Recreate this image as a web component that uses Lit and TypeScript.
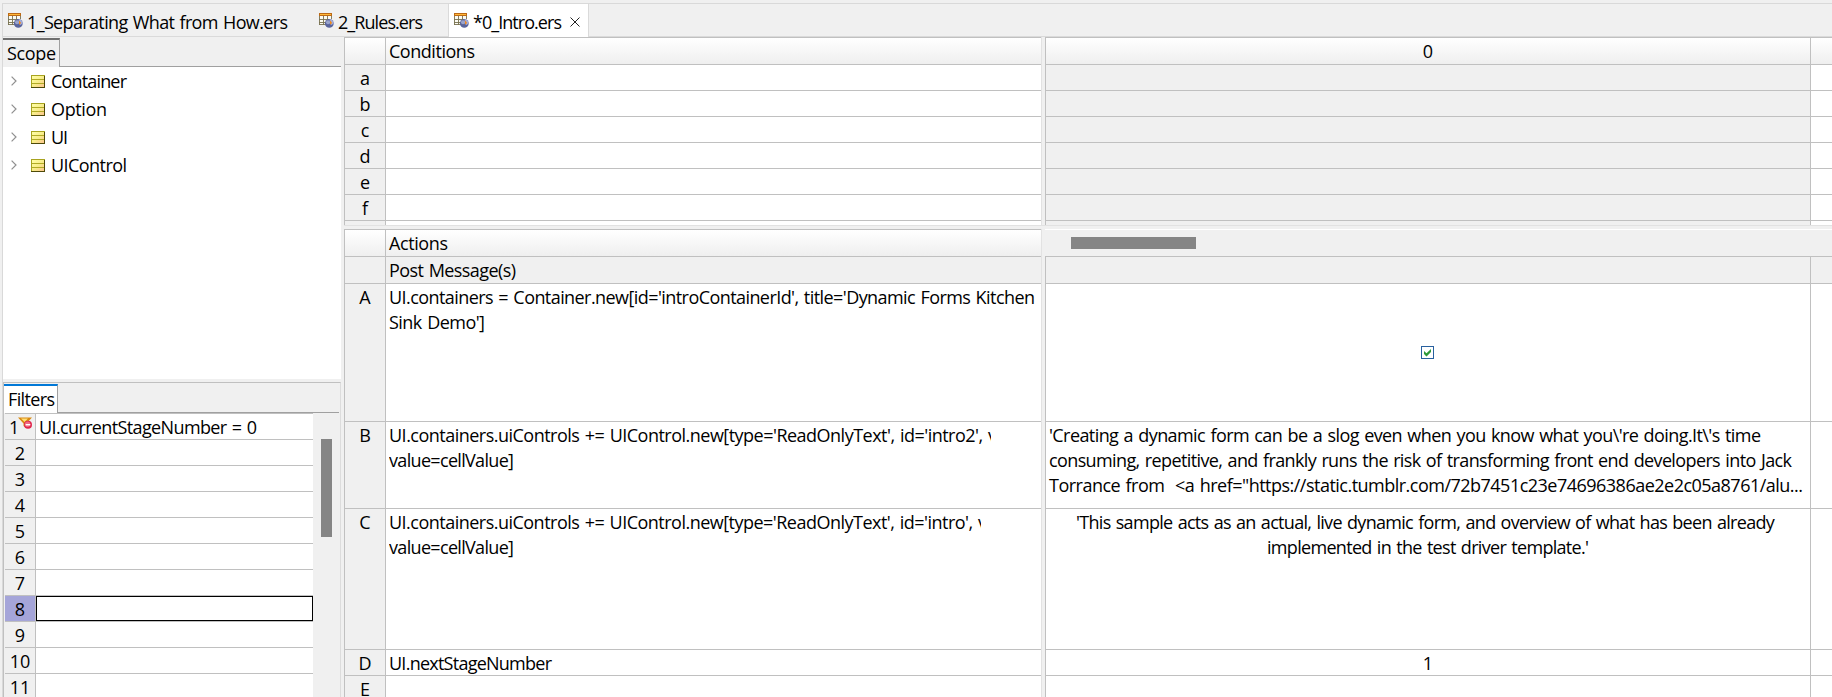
import { LitElement, html, css, svg, nothing } from "lit";
import { customElement, property, state } from "lit/decorators.js";
import { classMap } from "lit/directives/class-map.js";
import { styleMap } from "lit/directives/style-map.js";

/** One line of text tracked to occupy a given advance width. */
@customElement("text-line")
class TextLine extends LitElement {
  static styles = css`
    :host { display: block; white-space: pre; line-height: 25px; height: 25px; word-spacing: 1.2px; }
    .run { display: inline-block; }
  `;
  @property() text = "";
  @property({ type: Number }) width = 0;
  @state() private tracking = 0;

  firstUpdated() {
    const run = this.renderRoot.querySelector(".run") as HTMLElement;
    const natural = run.getBoundingClientRect().width;
    if (this.width && this.text.length > 1) {
      this.tracking = (this.width - natural) / (this.text.length - 1);
    }
  }
  render() {
    return html`<span class="run" style=${styleMap({ letterSpacing: `${this.tracking}px`, marginRight: `${-this.tracking}px` })}>${this.text}</span>`;
  }
}

type Line = [string, number];
const line = ([t, w]: Line) => html`<text-line .text=${t} .width=${w}></text-line>`;

const sheetIcon = html`<svg class="sheet" width="16" height="16" viewBox="0 0 16 16">
  <rect x="1" y="1" width="11" height="11" fill="#fbfaf2" />
  <path d="M.5 3v9M4.5 3v9M8.5 3v7M12.5 3v3M0 6.5h11M0 9.5h8M0 11.5h7" stroke="#77704f" stroke-width=".9" fill="none" />
  <rect x="0.5" y="0.5" width="12" height="2" fill="#ffb838" stroke="#bd6a17" />
  <circle cx="10.3" cy="10.4" r="4.4" fill="#5a659c" />
  <circle cx="9" cy="9.2" r="2" fill="#9aa4cc" />
  <path d="M10.6 10.4V6.2a4.2 4.2 0 0 1 4 4.2L12.5 12z" fill="#a4adda" />
  <path d="M11 7.2l2.2 2.8-2.2 1.8z" fill="#f08a1d" />
</svg>`;

const entityIcon = html`<svg width="14" height="13" viewBox="0 0 14 13">
  <defs><linearGradient id="g" x1="0" y1="0" x2="1" y2="1">
    <stop offset="0" stop-color="#ffffa6" /><stop offset=".5" stop-color="#f8ee8a" /><stop offset="1" stop-color="#fcc58f" />
  </linearGradient></defs>
  <rect width="14" height="13" fill="#a8a320" />
  <rect x="1" y="1" width="12" height="11" fill="url(#g)" />
  <path d="M1 4.5h12M1 8.5h12" stroke="#b1aa25" />
  <path d="M0 12.5h14M13.5 1v12" stroke="#4e4a08" />
</svg>`;

const filterIcon = html`<svg class="funnel" width="14" height="13" viewBox="0 0 14 13">
  <path d="M0 .5h14L8.5 6.5V11L5.5 9V6.5z" fill="#d98a12" />
  <path d="M3 1.5h7L6.6 5z" fill="#ffdf78" />
  <circle cx="10" cy="7.7" r="4" fill="#e0264c" />
  <circle cx="9.6" cy="7.2" r="2.7" fill="#f06a83" />
  <path d="M7.7 7.7h4.6" stroke="#fff" stroke-width="1.4" />
</svg>`;

const TABS: { line: Line; active?: boolean; cls: string }[] = [
  { line: ["1_Separating What from How.ers", 261], cls: "t1" },
  { line: ["2_Rules.ers", 85], cls: "t2" },
  { line: ["*0_Intro.ers", 89], cls: "t3", active: true },
];

const ENTITIES: Line[] = [["Container", 76], ["Option", 56], ["UI", 17], ["UIControl", 76]];

const CONDITIONS = ["a", "b", "c", "d", "e", "f", ""];

const ACTIONS: { id: string; height: number; lines: Line[]; clip?: number }[] = [
  { id: "A", height: 137, lines: [["UI.containers = Container.new[id='introContainerId', title='Dynamic Forms Kitchen", 646], ["Sink Demo']", 96]] },
  { id: "B", height: 86, clip: 605, lines: [["UI.containers.uiControls += UIControl.new[type='ReadOnlyText', id='intro2', v", 608], ["value=cellValue]", 125]] },
  { id: "C", height: 140, clip: 595, lines: [["UI.containers.uiControls += UIControl.new[type='ReadOnlyText', id='intro', v", 598], ["value=cellValue]", 125]] },
  { id: "D", height: 25, lines: [["UI.nextStageNumber", 163]] },
  { id: "E", height: 25, lines: [] },
];

const RULES: { height: number; lines: Line[]; left?: boolean; check?: boolean }[] = [
  { height: 137, lines: [], check: true },
  { height: 86, left: true, lines: [
    ["'Creating a dynamic form can be a slog even when you know what you\\'re doing.It\\'s time", 712],
    ["consuming, repetitive, and frankly runs the risk of transforming front end developers into Jack", 743],
    ["Torrance from  <a href=\"https://static.tumblr.com/72b7451c23e74696386ae2e2c05a8761/alu...", 754]] },
  { height: 140, lines: [
    ["'This sample acts as an actual, live dynamic form, and overview of what has been already ", 704],
    ["implemented in the test driver template.'", 322]] },
  { height: 25, lines: [["1", 0]] },
  { height: 25, lines: [] },
];

@customElement("app-root")
class AppRoot extends LitElement {
  static styles = css`
    :host { display: block; width: 1832px; height: 697px; overflow: hidden; background: #f0f0f0; color: #000;
      font: 18px/25px "Open Sans", "Noto Sans", sans-serif; }
    * { box-sizing: border-box; }
    svg { display: block; flex: none; }
    .window { margin: 3px 0 0 2px; border-top: 1px solid #d9d9d9; border-left: 1px solid #d9d9d9; height: 694px; display: flex; flex-direction: column; }
    .tabs { display: flex; height: 33px; flex: none; border-bottom: 1px solid #dadada; }
    .tab { display: flex; height: 32px; padding: 6px 0 0 5px; gap: 3px; }
    .t1 { width: 310px; }
    .t2 { width: 135px; padding-left: 6px; }
    .t3 { width: 141px; background: #fff; border: 1px solid #dadada; border-width: 0 1px 0 1px; height: 33px; }
    .tab .sheet { margin-top: 3px; }
    .close { margin: 7px 0 0 5px; }
    .main { display: flex; flex: 1; min-height: 0; }
    .side { width: 338px; display: flex; flex-direction: column; flex: none; }
    .scope { height: 342px; background: #fff; }
    .strip { height: 30px; display: flex; background: #f0f0f0; }
    .rest { flex: 1; border-bottom: 1px solid #a0a0a0; }
    .scope-tab { width: 57px; border-top: 2px solid #6e6e6e; border-right: 1px solid #a0a0a0; padding: 1px 0 0 4px; margin-top: 1px; }
    .tree { display: flex; flex-direction: column; gap: 3px; padding-top: 2px; }
    .node { display: flex; height: 25px; padding-left: 8px; }
    .node .chev { margin: 7px 14px 0 0; }
    .node .ent { margin: 6px 6px 0 0; }
    .filters { margin-top: 3px; flex: 1; border: 1px solid #c0c0c0; border-right-color: #dcdcdc; border-bottom: 0; display: flex; flex-direction: column; min-height: 0; overflow: hidden; }
    .filters .strip { width: 335px; flex: none; }
    .filter-tab { width: 54px; background: #fff; border-top: 2px solid #0078d7; border-right: 1px solid #a0a0a0; margin-top: 1px; padding: 1px 0 0 4px; }
    .fbody { display: flex; margin-left: 1px; }
    .ftable { width: 308px; border-top: 1px solid #c0c0c0; }
    .frow { display: flex; height: 26px; border-bottom: 1px solid #c0c0c0; background: #fff; }
    .fnum { width: 31px; background: #f0f0f0; border-right: 1px solid #c0c0c0; text-align: center; position: relative; flex: none; line-height: 27px; }
    .fnum.one { text-align: left; padding-left: 4px; }
    .fnum.sel { background: #a5a5d9; }
    .funnel { position: absolute; left: 13px; top: 3px; }
    .fcell { flex: 1; padding: 1px 0 0 3px; }
    .fcell.sel { border: 1px solid #000; }
    .vthumb { width: 11px; height: 98px; margin: 26px 0 0 8px; background: #858585; }
    .editor { margin-left: 3px; flex: 1; display: flex; flex-direction: column; min-width: 0; }
    .pane { display: flex; flex: none; }
    .cond { height: 189px; overflow: hidden; border-bottom: 1px solid #e2e2e2; }
    .act { height: 470px; margin-top: 3px; overflow: hidden; }
    .left { width: 697px; border-left: 1px solid #c0c0c0; border-top: 1px solid #c0c0c0; flex: none; }
    .gap { width: 4px; border-left: 1px solid #e2e2e2; background: #f0f0f0; flex: none; }
    .right { flex: 1; border-left: 1px solid #c0c0c0; border-top: 1px solid #c0c0c0; }
    .row { display: flex; border-bottom: 1px solid #c0c0c0; background: #fff; box-sizing: content-box; }
    .head { background: linear-gradient(#fff, #efefef); height: 26px; }
    .c25 { height: 25px; }
    .num { width: 41px; background: #f0f0f0; border-right: 1px solid #c0c0c0; text-align: center; flex: none; line-height: 27px; }
    .head .num { background: none; }
    .cell { flex: 1; padding: 1px 0 0 3px; }
    .clip { overflow: hidden; }
    .big { width: 765px; border-right: 1px solid #c0c0c0; flex: none; display: flex; flex-direction: column; align-items: center; padding-top: 1px; }
    .big.start { align-items: flex-start; padding-left: 3px; }
    .grey { background: #f0f0f0; }
    .act .right { border: 0; }
    .hbar { height: 28px; border-top: 1px solid #fff; border-bottom: 1px solid #c0c0c0; padding: 7px 0 0 26px; }
    .hthumb { width: 125px; height: 12px; background: #858585; }
    .rbody { border-left: 1px solid #c0c0c0; }
    .check { margin: 61px 2px 0 0; }
    .post, .post .big { height: 26px; background: #f0f0f0; }
  `;

  private tabBar() {
    return html`<div class="tabs">${TABS.map((t) => html`<div class="tab ${t.cls}">
      ${sheetIcon}${line(t.line)}
      ${t.active ? html`<svg class="close" width="10" height="10" viewBox="0 0 10 10"><path d="M.5 .5l9 9M9.5 .5l-9 9" stroke="#222" fill="none" /></svg>` : nothing}
    </div>`)}</div>`;
  }

  private scope() {
    return html`<div class="scope">
      <div class="strip"><div class="scope-tab">${line(["Scope", 49])}</div><div class="rest"></div></div>
      <div class="tree">${ENTITIES.map((e) => html`<div class="node">
        <svg class="chev" width="6" height="10" viewBox="0 0 6 10"><path d="M.6 .6L5 5 .6 9.4" stroke="#909090" stroke-width="1.2" fill="none" /></svg>
        <div class="ent">${entityIcon}</div>${line(e)}</div>`)}</div>
    </div>`;
  }

  private filters() {
    return html`<div class="filters">
      <div class="strip"><div class="filter-tab">${line(["Filters", 47])}</div><div class="rest"></div></div>
      <div class="fbody">
        <div class="ftable">${Array.from({ length: 11 }, (_, i) => i + 1).map((n) => html`<div class="frow">
          <div class=${classMap({ fnum: true, one: n === 1, sel: n === 8 })}>${n}${n === 1 ? filterIcon : nothing}</div>
          <div class=${classMap({ fcell: true, sel: n === 8 })}>${n === 1 ? line(["UI.currentStageNumber = 0", 218]) : nothing}</div>
        </div>`)}</div>
        <div class="vthumb"></div>
      </div>
    </div>`;
  }

  private conditions() {
    return html`<div class="pane cond">
      <div class="left">
        <div class="row head"><div class="num"></div><div class="cell">${line(["Conditions", 86])}</div></div>
        ${CONDITIONS.map((c) => html`<div class="row c25"><div class="num">${c}</div><div class="cell"></div></div>`)}
      </div>
      <div class="gap"></div>
      <div class="right">
        <div class="row head"><div class="big">0</div></div>
        ${CONDITIONS.map(() => html`<div class="row c25"><div class="big grey"></div></div>`)}
      </div>
    </div>`;
  }

  private actions() {
    return html`<div class="pane act">
      <div class="left">
        <div class="row head"><div class="num"></div><div class="cell">${line(["Actions", 59])}</div></div>
        <div class="row post"><div class="num"></div><div class="cell">${line(["Post Message(s)", 127])}</div></div>
        ${ACTIONS.map((a) => html`<div class="row" style=${styleMap({ height: `${a.height}px` })}>
          <div class="num">${a.id}</div>
          <div class="cell"><div class="clip" style=${styleMap({ width: a.clip ? `${a.clip - 3}px` : "auto" })}>${a.lines.map(line)}</div></div>
        </div>`)}
      </div>
      <div class="gap"></div>
      <div class="right">
        <div class="hbar"><div class="hthumb"></div></div>
        <div class="rbody">
          <div class="row post"><div class="big"></div></div>
          ${RULES.map((r) => html`<div class="row" style=${styleMap({ height: `${r.height}px` })}>
            <div class=${classMap({ big: true, start: !!r.left })}>${r.check ? html`<svg class="check" width="13" height="13" viewBox="0 0 13 13">
              <rect x=".5" y=".5" width="12" height="12" fill="#fff" stroke="#29619f" />
              <path d="M3 5v3l2.5 2.4L10 6V3L5.5 7.2z" fill="#2f9a38" /></svg>` : r.lines.map(line)}</div>
          </div>`)}
        </div>
      </div>
    </div>`;
  }

  render() {
    return html`<div class="window">${this.tabBar()}
      <div class="main">
        <div class="side">${this.scope()}${this.filters()}</div>
        <div class="editor">${this.conditions()}${this.actions()}</div>
      </div>
    </div>`;
  }
}
